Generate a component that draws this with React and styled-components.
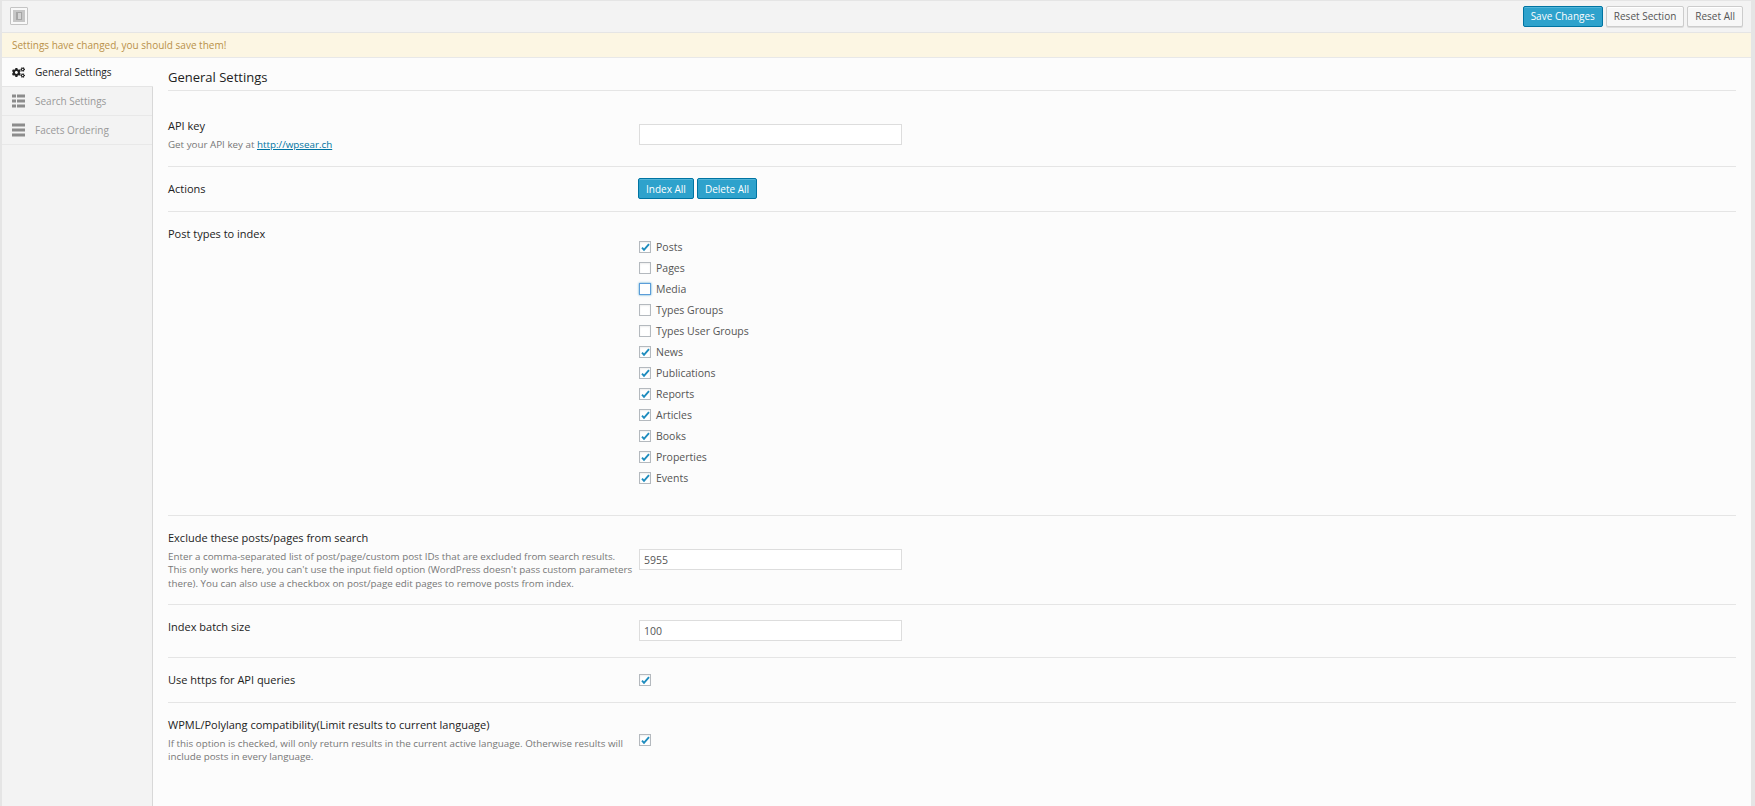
import React from "react";
import styled, { createGlobalStyle } from "styled-components";
import { FaCogs } from "react-icons/fa";

const Global = createGlobalStyle`
  html, body { margin: 0; padding: 0; background: #fff; }
  body { font-family: "Open Sans", "Liberation Sans", sans-serif; color: #333; overflow: hidden; }
  * { box-sizing: border-box; }
`;

const Page = styled.div`
  height: 806px;
  display: flex;
  flex-direction: column;
  border-left: 2px solid #e5e5e5;
  border-right: 4px solid #e5e5e5;
  border-top: 1px solid #e5e5e5;
  background: #fcfcfc;
`;
const TopBar = styled.div`
  height: 31px;
  flex: none;
  display: flex;
  align-items: center;
  justify-content: space-between;
  padding: 0 8px 1px 8px;
  background: #f3f3f3;
`;
const LogoBox = styled.div`
  width: 18px;
  height: 18px;
  border: 1px solid #c4c4c4;
  border-radius: 1px;
  background: #f8f8f8;
  display: flex;
  align-items: center;
  justify-content: center;
`;
const ButtonRow = styled.div`
  display: flex;
  gap: 3px;
`;
const Button = styled.button`
  height: 21px;
  padding: 0 7px;
  border-radius: 2px;
  font: 400 10px "Open Sans", "Liberation Sans", sans-serif;
  border: 1px solid ${p => (p.$primary ? "#0074a2" : "#ccc")};
  color: ${p => (p.$primary ? "#fff" : "#555")};
  background: ${p => (p.$primary ? "#2ea2cc" : "#f7f7f7")};
  box-shadow: ${p => (p.$primary ? "inset 0 1px 0 rgba(120,200,230,.5)" : "inset 0 1px 0 #fff, 0 1px 0 #ddd")};
`;
const Notice = styled.div`
  height: 26px;
  flex: none;
  padding-left: 10px;
  display: flex;
  align-items: center;
  font-size: 10px;
  color: #b9914a;
  background: #fcf6e3;
  border-top: 1px solid #e5e5e5;
  border-bottom: 1px solid #e8e8e8;
`;
const Body = styled.div`
  flex: 1;
  display: flex;
  min-height: 0;
`;
const Sidebar = styled.nav`
  width: 151px;
  flex: none;
  background: #f3f3f3;
  border-right: 1px solid #d8d8d8;
`;
const NavItem = styled.div`
  height: 29px;
  display: flex;
  align-items: center;
  font-size: 10px;
  color: ${p => (p.$active ? "#222" : "#999")};
  background: ${p => (p.$active ? "#fcfcfc" : "transparent")};
  margin-right: ${p => (p.$active ? "-1px" : "0")};
  position: relative;
  border-bottom: 1px solid ${p => (p.$active ? "#e5e5e5" : "#e8e8e8")};
`;
const NavIcon = styled.span`
  width: 33px;
  padding-left: 10px;
  display: flex;
  align-items: center;
  color: ${p => (p.$active ? "#222" : "#8c8c8c")};
  font-size: 13px;
`;
const Main = styled.main`
  flex: 1;
  min-width: 0;
  padding: 0 15px 0 15px;
`;
const Heading = styled.h2`
  margin: 0;
  height: 33px;
  padding-top: 10px;
  font-size: 13px;
  line-height: 18px;
  font-weight: 400;
  color: #222;
  border-bottom: 1px solid #e5e5e5;
`;
const Row = styled.section`
  display: grid;
  grid-template-columns: 471px 1fr;
  padding-top: ${p => p.$pad}px;
  height: ${p => p.$h}px;
  border-bottom: ${p => (p.$last ? "none" : "1px solid #e5e5e5")};
`;
const Label = styled.div`
  font-size: 11px;
  line-height: 15px;
  font-weight: 400;
  color: #222;
  padding-top: ${p => p.$top || 0}px;
`;
const Hint = styled.div`
  margin-top: 5px;
  width: 466px;
  font-size: 9.8px;
  line-height: 13.3px;
  color: #777;
  a { color: #0074a2; }
`;
const Field = styled.div`
  margin-top: ${p => p.$top || 0}px;
`;
const TextInput = styled.input`
  display: block;
  width: 263px;
  height: 21px;
  padding: 0 4px;
  border: 1px solid #ddd;
  background: #fff;
  font: 10.5px "Open Sans", sans-serif;
  color: #555;
  outline: none;
`;
const Actions = styled.div`
  display: flex;
  gap: 3px;
  margin-left: -1px;
`;
const CheckList = styled.div`
  display: flex;
  flex-direction: column;
  margin-top: 10px;
`;
const CheckRow = styled.label`
  height: 21px;
  display: flex;
  align-items: center;
  gap: 5px;
  font-size: 10.5px;
  color: #555;
`;
const Box = styled.span`
  width: 12px;
  height: 12px;
  flex: none;
  background: #fff;
  border: 1px solid ${p => (p.$focus ? "#5b9dd9" : "#b4b9be")};
  box-shadow: ${p => (p.$focus ? "0 0 2px rgba(30,140,190,.8)" : "inset 0 1px 2px rgba(0,0,0,.07)")};
  display: block;
`;

const Check = ({ on, focus }) => (
  <Box $focus={focus}>
    {on && (
      <svg width="10" height="10" viewBox="0 0 10 10" style={{ display: "block", overflow: "visible" }}>
        <path d="M2 5.6 L4 7.8 L9 2.2" fill="none" stroke="#1e8cbe" strokeWidth="1.9" />
      </svg>
    )}
  </Box>
);

const ThListIcon = () => (
  <svg width="13" height="14" viewBox="0 0 13 14">
    {[0, 5, 10].map(y => (
      <g key={y} fill="#8c8c8c">
        <rect x="0" y={y + 0.5} width="4" height="3" />
        <rect x="5" y={y + 0.5} width="8" height="3" />
      </g>
    ))}
  </svg>
);
const BarsIcon = () => (
  <svg width="13" height="14" viewBox="0 0 13 14">
    {[0, 5, 10].map(y => (
      <rect key={y} x="0" y={y + 0.5} width="13" height="3" fill="#8c8c8c" />
    ))}
  </svg>
);

const types = [
  ["Posts", true], ["Pages", false], ["Media", false, true], ["Types Groups", false],
  ["Types User Groups", false], ["News", true], ["Publications", true], ["Reports", true],
  ["Articles", true], ["Books", true], ["Properties", true], ["Events", true],
];

export default function App() {
  return (
    <Page>
      <Global />
      <TopBar>
        <LogoBox>
          <svg width="12" height="12" viewBox="0 0 12 12">
            <rect x="0" y="0" width="12" height="12" fill="#c6c6c6" />
            <rect x="3" y="2" width="6" height="8" fill="#a5a5a5" />
            <rect x="5" y="3" width="3" height="6" fill="#d4d4d4" />
          </svg>
        </LogoBox>
        <ButtonRow>
          <Button $primary>Save Changes</Button>
          <Button>Reset Section</Button>
          <Button>Reset All</Button>
        </ButtonRow>
      </TopBar>
      <Notice>Settings have changed, you should save them!</Notice>
      <Body>
        <Sidebar>
          <NavItem $active><NavIcon $active><FaCogs /></NavIcon>General Settings</NavItem>
          <NavItem><NavIcon><ThListIcon /></NavIcon>Search Settings</NavItem>
          <NavItem><NavIcon><BarsIcon /></NavIcon>Facets Ordering</NavItem>
        </Sidebar>
        <Main>
          <Heading>General Settings</Heading>
          <Row $h={76} $pad={27}>
            <div>
              <Label>API key</Label>
              <Hint>Get your API key at <a href="#k">http://wpsear.ch</a></Hint>
            </div>
            <Field $top={6}><TextInput /></Field>
          </Row>
          <Row $h={45} $pad={11}>
            <Label $top={3}>Actions</Label>
            <Actions>
              <Button $primary>Index All</Button>
              <Button $primary>Delete All</Button>
            </Actions>
          </Row>
          <Row $h={304} $pad={14}>
            <Label>Post types to index</Label>
            <CheckList>
              {types.map(([n, on, f]) => (
                <CheckRow key={n}><Check on={on} focus={f} />{n}</CheckRow>
              ))}
            </CheckList>
          </Row>
          <Row $h={89} $pad={14}>
            <div>
              <Label>Exclude these posts/pages from search</Label>
              <Hint>Enter a comma-separated list of post/page/custom post IDs that are excluded from search results. This only works here, you can't use the input field option (WordPress doesn't pass custom parameters there). You can also use a checkbox on post/page edit pages to remove posts from index.</Hint>
            </div>
            <Field $top={19}><TextInput defaultValue="5955" /></Field>
          </Row>
          <Row $h={53} $pad={13}>
            <Label $top={1}>Index batch size</Label>
            <Field $top={2}><TextInput defaultValue="100" /></Field>
          </Row>
          <Row $h={45} $pad={14}>
            <Label>Use https for API queries</Label>
            <Field $top={2}><Check on /></Field>
          </Row>
          <Row $last $h={100} $pad={14}>
            <div>
              <Label>WPML/Polylang compatibility(Limit results to current language)</Label>
              <Hint>If this option is checked, will only return results in the current active language. Otherwise results will include posts in every language.</Hint>
            </div>
            <Field $top={17}><Check on /></Field>
          </Row>
        </Main>
      </Body>
    </Page>
  );
}
